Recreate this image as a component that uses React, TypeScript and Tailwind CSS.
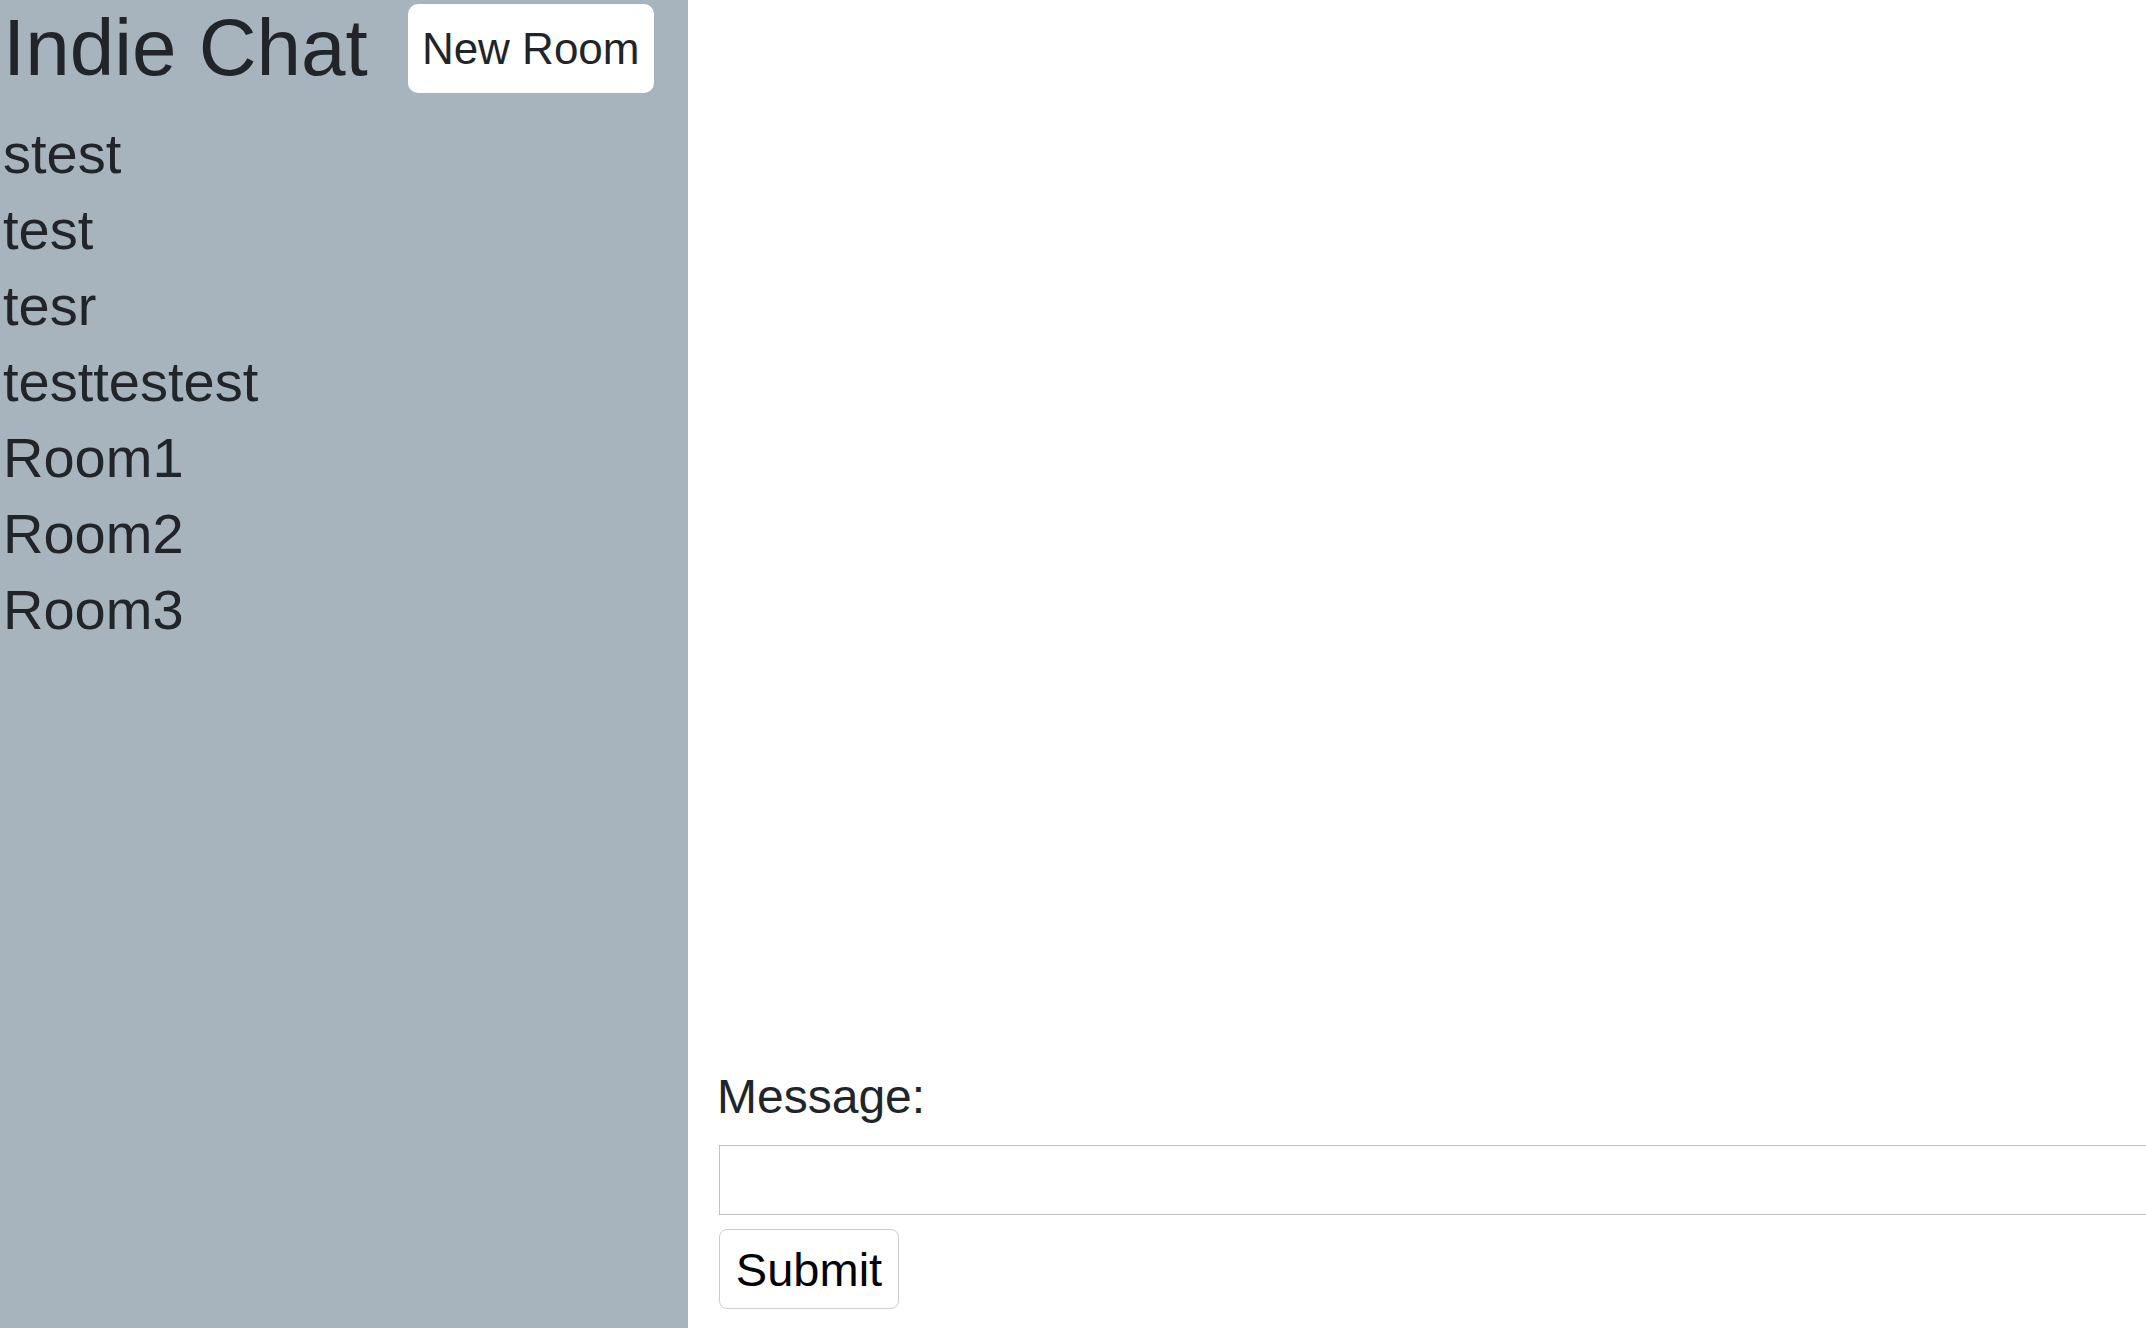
import React from "react";

export default function App() {
  const rooms = ["stest", "test", "tesr", "testtestest", "Room1", "Room2", "Room3"];
  return (
    <div className="flex h-[1328px] w-[2146px] overflow-hidden bg-white text-[#212529] [font-family:'Liberation_Sans',Arial,sans-serif]">
      <aside className="flex h-full w-[688px] shrink-0 flex-col bg-[#a7b4bd] pl-[3px]">
        <div className="flex h-[116px] items-start">
          <h1 className="mt-[8px] shrink-0 whitespace-nowrap text-[80px] font-normal leading-none">
            Indie Chat
          </h1>
          <button className="ml-[40px] mt-[4px] flex h-[89px] w-[246px] shrink-0 items-center justify-center whitespace-nowrap rounded-[10px] bg-white text-[44px] leading-none text-[#212529]">
            New Room
          </button>
        </div>
        <ul className="flex flex-col">
          {rooms.map((r) => (
            <li key={r} className="text-[56px] leading-[76px]">
              {r}
            </li>
          ))}
        </ul>
      </aside>
      <main className="flex min-w-0 flex-1 flex-col justify-end overflow-hidden pb-[19px] pl-[31px]">
        <label className="-ml-[2px] block text-[48px] leading-none">Message:</label>
        <input
          type="text"
          className="mt-[24px] box-border h-[70px] w-[1500px] shrink-0 border border-[#c2c2c2] bg-white outline-none"
        />
        <div className="mt-[14px]">
          <button className="flex h-[80px] w-[180px] items-center justify-center rounded-[8px] border border-[#cccccc] bg-white text-[47px] leading-none text-black">
            Submit
          </button>
        </div>
      </main>
    </div>
  );
}
